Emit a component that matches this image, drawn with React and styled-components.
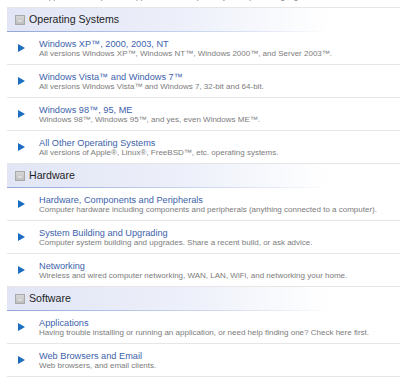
import React from "react";
import styled, { createGlobalStyle } from "styled-components";

const GlobalStyle = createGlobalStyle`
  html, body {
    margin: 0;
    padding: 0;
    background: #fff;
    overflow: hidden;
  }
  body {
    font-family: "Liberation Sans", Arial, sans-serif;
  }
`;

const Page = styled.div`
  width: 400px;
  height: 385px;
  overflow: hidden;
  padding-left: 7px;
  box-sizing: border-box;
`;

const List = styled.div`
  margin-top: -25px;
  display: flex;
  flex-direction: column;
`;

const Header = styled.div`
  height: 24px;
  box-sizing: border-box;
  display: flex;
  align-items: center;
  gap: 4px;
  padding: 0 0 1px 8px;
  background:
    linear-gradient(to right, #93a8d8 0%, #c7d2ee 45%, rgba(255, 255, 255, 0) 82%)
      left bottom / 100% 1px no-repeat,
    linear-gradient(to right, #e1e5f5 0%, #edf0fa 45%, #ffffff 82%);
`;

const HeaderTitle = styled.span`
  font-size: 10.6px;
  line-height: 23px;
  color: #1e1e1e;
`;

const Toggle = styled.svg`
  width: 10px;
  height: 10px;
  flex: none;
  display: block;
`;

const Row = styled.div`
  height: 33px;
  box-sizing: border-box;
  border-bottom: 1px solid #e6e6e6;
  display: flex;
  align-items: center;
`;

const ArrowCell = styled.div`
  width: 32px;
  flex: none;
  padding-left: 11px;
  box-sizing: border-box;
  display: flex;
  align-items: center;
`;

const Text = styled.div`
  display: flex;
  flex-direction: column;
  white-space: nowrap;
`;

const Title = styled.a`
  font-size: 9.2px;
  line-height: 10px;
  color: #3d5fab;
  text-decoration: none;
`;

const Desc = styled.span`
  font-size: 8px;
  line-height: 9px;
  color: #7c7c7c;
`;

const sections = [
  {
    name: "Operating Systems",
    forums: [
      {
        title: "Windows XP™, 2000, 2003, NT",
        desc: "All versions Windows XP™, Windows NT™, Windows 2000™, and Server 2003™."
      },
      {
        title: "Windows Vista™ and Windows 7™",
        desc: "All versions Windows Vista™ and Windows 7, 32-bit and 64-bit."
      },
      {
        title: "Windows 98™, 95, ME",
        desc: "Windows 98™, Windows 95™, and yes, even Windows ME™."
      },
      {
        title: "All Other Operating Systems",
        desc: "All versions of Apple®, Linux®, FreeBSD™, etc. operating systems."
      }
    ]
  },
  {
    name: "Hardware",
    forums: [
      {
        title: "Hardware, Components and Peripherals",
        desc: "Computer hardware including components and peripherals (anything connected to a computer)."
      },
      {
        title: "System Building and Upgrading",
        desc: "Computer system building and upgrades. Share a recent build, or ask advice."
      },
      {
        title: "Networking",
        desc: "Wireless and wired computer networking, WAN, LAN, WiFi, and networking your home."
      }
    ]
  },
  {
    name: "Software",
    forums: [
      {
        title: "Applications",
        desc: "Having trouble installing or running an application, or need help finding one? Check here first."
      },
      {
        title: "Web Browsers and Email",
        desc: "Web browsers, and email clients."
      }
    ]
  }
];

function ToggleIcon() {
  return (
    <Toggle viewBox="0 0 10 10">
      <defs>
        <linearGradient id="tg" x1="0" y1="0" x2="0" y2="1">
          <stop offset="0" stopColor="#d8d8d8" />
          <stop offset="1" stopColor="#bdbdbd" />
        </linearGradient>
      </defs>
      <rect x="0.5" y="0.5" width="9" height="9" fill="url(#tg)" stroke="#a9a9a9" />
      <rect x="3" y="5.5" width="4" height="1" fill="#f4f4f4" />
    </Toggle>
  );
}

function Arrow() {
  return (
    <svg width="7" height="8" viewBox="0 0 7 8" style={{ display: "block" }}>
      <path d="M0 0 L7 4 L0 8 Z" fill="#1a6dc3" />
    </svg>
  );
}

function Forum({ title, desc }) {
  return (
    <Row>
      <ArrowCell>
        <Arrow />
      </ArrowCell>
      <Text>
        <Title href="#">{title}</Title>
        <Desc>{desc}</Desc>
      </Text>
    </Row>
  );
}

export default function App() {
  return (
    <Page>
      <GlobalStyle />
      <List>
        <Forum
          title="Mobile Devices and Apps"
          desc="Support for smartphones, apps, and tablets, plus any other portable gadgets."
        />
        {sections.map(section => (
          <React.Fragment key={section.name}>
            <Header>
              <ToggleIcon />
              <HeaderTitle>{section.name}</HeaderTitle>
            </Header>
            {section.forums.map(f => (
              <Forum key={f.title} {...f} />
            ))}
          </React.Fragment>
        ))}
      </List>
    </Page>
  );
}
